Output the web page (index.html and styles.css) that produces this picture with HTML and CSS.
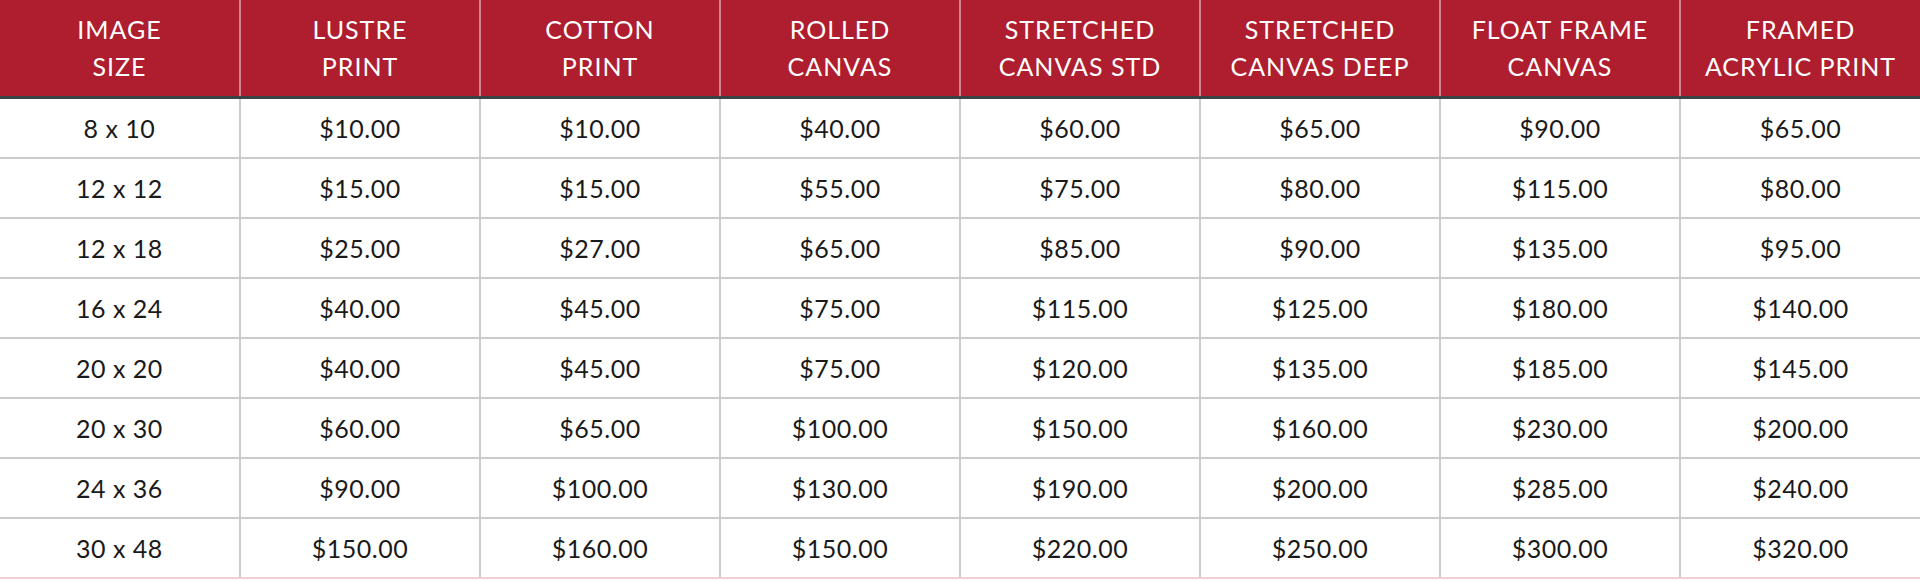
FILE: index.html
```html
<!DOCTYPE html>
<html>
<head>
<meta charset="utf-8">
<link rel="stylesheet" href="styles.css">
</head>
<body>
<table class="prices">
  <thead>
    <tr>
      <th>IMAGE<br>SIZE</th>
      <th>LUSTRE<br>PRINT</th>
      <th>COTTON<br>PRINT</th>
      <th>ROLLED<br>CANVAS</th>
      <th>STRETCHED<br>CANVAS STD</th>
      <th>STRETCHED<br>CANVAS DEEP</th>
      <th>FLOAT FRAME<br>CANVAS</th>
      <th>FRAMED<br>ACRYLIC PRINT</th>
    </tr>
  </thead>
  <tbody>
    <tr><td>8 x 10</td><td>$10.00</td><td>$10.00</td><td>$40.00</td><td>$60.00</td><td>$65.00</td><td>$90.00</td><td>$65.00</td></tr>
    <tr><td>12 x 12</td><td>$15.00</td><td>$15.00</td><td>$55.00</td><td>$75.00</td><td>$80.00</td><td>$115.00</td><td>$80.00</td></tr>
    <tr><td>12 x 18</td><td>$25.00</td><td>$27.00</td><td>$65.00</td><td>$85.00</td><td>$90.00</td><td>$135.00</td><td>$95.00</td></tr>
    <tr><td>16 x 24</td><td>$40.00</td><td>$45.00</td><td>$75.00</td><td>$115.00</td><td>$125.00</td><td>$180.00</td><td>$140.00</td></tr>
    <tr><td>20 x 20</td><td>$40.00</td><td>$45.00</td><td>$75.00</td><td>$120.00</td><td>$135.00</td><td>$185.00</td><td>$145.00</td></tr>
    <tr><td>20 x 30</td><td>$60.00</td><td>$65.00</td><td>$100.00</td><td>$150.00</td><td>$160.00</td><td>$230.00</td><td>$200.00</td></tr>
    <tr><td>24 x 36</td><td>$90.00</td><td>$100.00</td><td>$130.00</td><td>$190.00</td><td>$200.00</td><td>$285.00</td><td>$240.00</td></tr>
    <tr class="last"><td>30 x 48</td><td>$150.00</td><td>$160.00</td><td>$150.00</td><td>$220.00</td><td>$250.00</td><td>$300.00</td><td>$320.00</td></tr>
  </tbody>
</table>
</body>
</html>
```
FILE: styles.css
```css
html, body {
  margin: 0;
  padding: 0;
  background: #ffffff;
}

.prices {
  width: 1920px;
  border-collapse: collapse;
  table-layout: fixed;
  font-family: Lato, "Noto Sans", "Liberation Sans", sans-serif;
  font-size: 25px;
}

.prices th {
  background: #ae1e2e;
  color: #ffffff;
  font-weight: 400;
  letter-spacing: 1px;
  line-height: 37px;
  height: 96px;
  padding: 0 4px;
  text-align: center;
  vertical-align: middle;
  border-left: 2px solid #d3858e;
  border-bottom: 3px solid #3a4444;
}

.prices th:first-child {
  border-left: none;
}

.prices td {
  color: #1a1a1a;
  letter-spacing: 0.5px;
  height: 58px;
  padding: 0;
  text-align: center;
  vertical-align: middle;
  border-left: 2px solid #cccccc;
  border-bottom: 2px solid #cccccc;
}

.prices td:first-child {
  border-left: none;
}

.prices tr.last td {
  border-bottom: 2px solid #f2cdd1;
}
```
